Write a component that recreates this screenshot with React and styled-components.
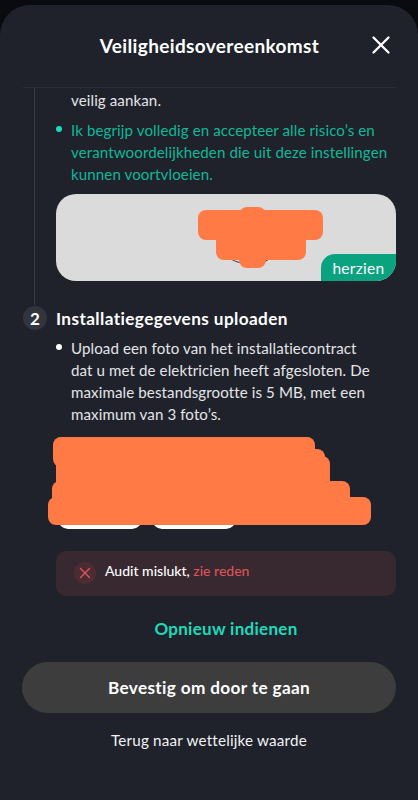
import React from "react";
import styled, { createGlobalStyle } from "styled-components";

const Global = createGlobalStyle`
  html, body { margin: 0; padding: 0; background: #0a0b10; }
  body { width: 418px; height: 800px; overflow: hidden; font-family: "Lato", "Noto Sans", sans-serif; }
  * { box-sizing: border-box; }
`;

const Sheet = styled.main`
  margin-top: 5px;
  height: 795px;
  background: #1f222b;
  border-radius: 30px 30px 0 0;
  display: flex;
  flex-direction: column;
  color: #fff;
`;

const Header = styled.header`
  height: 83px;
  margin: 0 22px 0 23px;
  flex: none;
  display: flex;
  align-items: center;
  justify-content: center;
  position: relative;
  border-bottom: 1px solid #2a2d36;
  padding-bottom: 2px;
`;

const Title = styled.h1`
  margin: 0;
  font-size: 19px;
  font-weight: 700;
  letter-spacing: 0.35px;
`;

const Close = styled.button`
  position: absolute;
  right: 5px;
  top: 30px;
  width: 20px;
  height: 20px;
  padding: 0;
  border: 0;
  background: none;
  color: #fff;
  display: flex;
`;

const Body = styled.div`
  flex: 1;
  min-height: 0;
  overflow: hidden;
  padding: 0 22px 0 23px;
`;

const StepOne = styled.section`
  margin-left: 11px;
  padding: 1px 0 0 21px;
  border-left: 1px solid #3a3d46;
  height: 217px;
`;

const Bullets = styled.ul`
  list-style: none;
  margin: 0;
  padding: 0 0 0 15px;
`;

const Line = styled.li`
  position: relative;
  font-size: 15.1px;
  line-height: 22px;
  letter-spacing: 0.1px;
  white-space: nowrap;
  color: ${(p) => p.$color || "#e4e5e8"};
  margin-bottom: ${(p) => p.$gap || 0}px;
  ${(p) =>
    p.$dot &&
    `&::before {
      content: "";
      position: absolute;
      left: -15px;
      top: 7px;
      width: 6px;
      height: 6px;
      border-radius: 50%;
      background: ${p.$dot};
    }`}
`;

const Card = styled.div`
  position: relative;
  height: 87px;
  margin-top: 9px;
  background: #dbdbdb;
  border-radius: 20px;
  overflow: hidden;
`;

const Badge = styled.span`
  position: absolute;
  right: 0;
  bottom: 0;
  width: 75px;
  height: 27px;
  background: #0ba37f;
  border-radius: 14px 0 0 0;
  color: #fff;
  font-size: 15.5px;
  display: flex;
  align-items: center;
  justify-content: center;
  letter-spacing: 0.3px;
`;

const Blot = styled.span`
  position: absolute;
  left: ${(p) => p.$x}px;
  top: ${(p) => p.$y}px;
  width: ${(p) => p.$w}px;
  height: ${(p) => p.$h}px;
  background: #ff7a45;
  border-radius: 8px;
`;

const HiddenArc = styled.svg`
  position: absolute;
  left: 172px;
  top: 60px;
`;

const StepHead = styled.div`
  display: flex;
  align-items: center;
  gap: 9px;
  height: 24px;
  margin-top: 1px;
`;

const StepNum = styled.span`
  width: 24px;
  height: 24px;
  flex: none;
  border-radius: 50%;
  background: #32353e;
  font-size: 17px;
  font-weight: 700;
  display: flex;
  align-items: center;
  justify-content: center;
`;

const StepTitle = styled.h2`
  margin: 0;
  font-size: 17.2px;
  font-weight: 700;
  letter-spacing: 0.4px;
`;

const StepTwo = styled.section`
  margin: 7px 0 0 33px;
`;

const Uploads = styled.div`
  position: relative;
  display: flex;
  align-items: flex-end;
  gap: 10px;
  height: 92px;
  margin-top: 12px;
  padding-left: 2px;
`;

const Thumb = styled.div`
  width: 84px;
  height: 60px;
  background: #fff;
  border-radius: 10px;
`;

const Failure = styled.div`
  display: flex;
  align-items: flex-start;
  gap: 9px;
  height: 45px;
  margin-top: 22px;
  padding: 10px 18px 0;
  background: #38282f;
  border-radius: 10px;
  font-size: 14px;
  font-weight: 500;
`;

const FailIcon = styled.span`
  width: 22px;
  height: 22px;
  margin-top: 1px;
  flex: none;
  border-radius: 50%;
  background: #4c2c33;
  color: #e2555b;
  display: flex;
  align-items: center;
  justify-content: center;
`;

const FailText = styled.span`
  line-height: 19px;
`;

const FailLink = styled.span`
  color: #d9545a;
`;

const Retry = styled.div`
  margin-top: 22px;
  text-align: center;
  font-size: 17px;
  font-weight: 700;
  line-height: 22px;
  letter-spacing: 0.3px;
  color: #1fd9bb;
`;

const Footer = styled.footer`
  flex: none;
  height: 138px;
  padding: 0 22px;
  display: flex;
  flex-direction: column;
  align-items: center;
`;

const Confirm = styled.button`
  width: 100%;
  height: 51px;
  flex: none;
  border: 0;
  border-radius: 26px;
  background: #3d3d3d;
  color: #fff;
  font: 700 17.2px "Lato", sans-serif;
  letter-spacing: 0.35px;
`;

const Back = styled.a`
  margin-top: 17px;
  font-size: 15.2px;
  line-height: 20px;
  letter-spacing: 0.2px;
  color: #f2f2f4;
`;

const CrossIcon = ({ size, width }) => (
  <svg width={size} height={size} viewBox="0 0 20 20" fill="none" stroke="currentColor" strokeWidth={width} strokeLinecap="round">
    <path d="M2.5 2.5l15 15M17.5 2.5l-15 15" />
  </svg>
);

export default function App() {
  return (
    <>
      <Global />
      <Sheet>
        <Header>
          <Title>Veiligheidsovereenkomst</Title>
          <Close aria-label="Sluiten">
            <CrossIcon size={20} width={2.3} />
          </Close>
        </Header>
        <Body>
          <StepOne>
            <Bullets>
              <Line $gap={8}>veilig aankan.</Line>
              <Line $color="#12b797" $dot="#1fd9bb">Ik begrijp volledig en accepteer alle risico’s en</Line>
              <Line $color="#12b797">verantwoordelijkheden die uit deze instellingen</Line>
              <Line $color="#12b797">kunnen voortvloeien.</Line>
            </Bullets>
            <Card>
              <HiddenArc width="44" height="16" viewBox="0 0 44 16" fill="none" stroke="#33343a" strokeWidth="1">
                <path d="M2 3c3 8 36 10 40 0" />
              </HiddenArc>
              <Blot $x={142} $y={16} $w={125} $h={30} />
              <Blot $x={160} $y={36} $w={90} $h={30} />
              <Blot $x={183} $y={13} $w={27} $h={61} />
              <Badge>herzien</Badge>
            </Card>
          </StepOne>
          <StepHead>
            <StepNum>2</StepNum>
            <StepTitle>Installatiegegevens uploaden</StepTitle>
          </StepHead>
          <StepTwo>
            <Bullets>
              <Line $dot="#fff">Upload een foto van het installatiecontract</Line>
              <Line>dat u met de elektricien heeft afgesloten. De</Line>
              <Line>maximale bestandsgrootte is 5 MB, met een</Line>
              <Line>maximum van 3 foto’s.</Line>
            </Bullets>
            <Uploads>
              <Thumb />
              <Thumb />
              <Blot $x={-3} $y={0} $w={262} $h={30} />
              <Blot $x={0} $y={12} $w={269} $h={40} />
              <Blot $x={0} $y={19} $w={274} $h={40} />
              <Blot $x={-4} $y={44} $w={298} $h={40} />
              <Blot $x={-8} $y={60} $w={323} $h={28} />
            </Uploads>
            <Failure>
              <FailIcon>
                <CrossIcon size={12} width={2.2} />
              </FailIcon>
              <FailText>
                Audit mislukt, <FailLink>zie reden</FailLink>
              </FailText>
            </Failure>
            <Retry>Opnieuw indienen</Retry>
          </StepTwo>
        </Body>
        <Footer>
          <Confirm>Bevestig om door te gaan</Confirm>
          <Back>Terug naar wettelijke waarde</Back>
        </Footer>
      </Sheet>
    </>
  );
}
